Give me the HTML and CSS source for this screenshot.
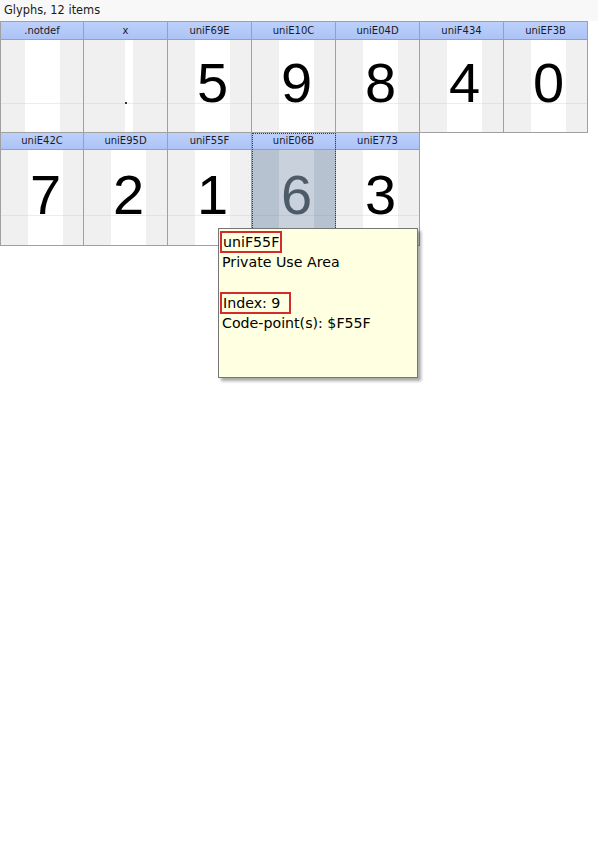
FILE: index.html
```html
<!DOCTYPE html>
<html>
<head>
<meta charset="utf-8">
<link rel="stylesheet" href="styles.css">
</head>
<body>
<div class="titlebar">Glyphs, 12 items</div>
<div class="grid">
  <div class="cell"><div class="hd">.notdef</div><div class="gl"><span class="box notdef"></span></div></div>
  <div class="cell"><div class="hd">x</div><div class="gl"><span class="box xbox"><span class="tick"></span></span></div></div>
  <div class="cell"><div class="hd">uniF69E</div><div class="gl"><span class="box">5</span></div></div>
  <div class="cell"><div class="hd">uniE10C</div><div class="gl"><span class="box">9</span></div></div>
  <div class="cell"><div class="hd">uniE04D</div><div class="gl"><span class="box">8</span></div></div>
  <div class="cell"><div class="hd">uniF434</div><div class="gl"><span class="box">4</span></div></div>
  <div class="cell"><div class="hd">uniEF3B</div><div class="gl"><span class="box">0</span></div></div>
  <div class="cell row2"><div class="hd">uniE42C</div><div class="gl"><span class="box">7</span></div></div>
  <div class="cell row2"><div class="hd">uniE95D</div><div class="gl"><span class="box">2</span></div></div>
  <div class="cell row2"><div class="hd">uniF55F</div><div class="gl"><span class="box">1</span></div></div>
  <div class="cell row2 sel"><div class="hd">uniE06B</div><div class="gl"><span class="box">6</span></div></div>
  <div class="cell row2"><div class="hd">uniE773</div><div class="gl"><span class="box">3</span></div></div>
</div>
<div class="tooltip">
  <div class="tl"><span class="mark">uniF55F</span></div>
  <div class="tl">Private Use Area</div>
  <div class="tl">&nbsp;</div>
  <div class="tl"><span class="mark wide">Index: 9</span></div>
  <div class="tl">Code-point(s): $F55F</div>
</div>
</body>
</html>
```
FILE: styles.css
```css
html, body {
  margin: 0;
  padding: 0;
  background: #ffffff;
}
body {
  position: relative;
  width: 598px;
  height: 855px;
  font-family: "DejaVu Sans", sans-serif;
}
.titlebar {
  height: 21px;
  line-height: 21px;
  padding-left: 4px;
  font-size: 11.4px;
  color: #1a1a1a;
  background: #f8f8f8;
  box-sizing: border-box;
}
.grid {
  display: grid;
  grid-template-columns: 83px repeat(6, 84px);
  width: 588px;
  box-sizing: border-box;
  border-top: 1px solid #a0a0a0;
  border-left: 1px solid #a0a0a0;
}
.cell {
  border-right: 1px solid #a0a0a0;
  border-bottom: 1px solid #a0a0a0;
  display: flex;
  flex-direction: column;
}
.hd {
  height: 17px;
  line-height: 17px;
  text-align: center;
  font-size: 10px;
  color: #1a1a2a;
  background: linear-gradient(#bcd0fa, #adc3f5);
  border-bottom: 1px solid #a0a0a0;
}
.gl {
  height: 92px;
  display: flex;
  background:
    linear-gradient(to bottom, transparent 63px, #e2e2e2 63px, #e2e2e2 64px, transparent 64px);
  background-color: #f0f0f0;
}
.row2 .hd {
  height: 16px;
  line-height: 16px;
}
.row2 .gl {
  height: 95px;
  background:
    linear-gradient(to bottom, transparent 65px, #e2e2e2 65px, #e2e2e2 66px, transparent 66px);
  background-color: #f0f0f0;
}
.box {
  display: block;
  margin-left: 27px;
  width: 35px;
  background:
    linear-gradient(to bottom, transparent 63px, #ececec 63px, #ececec 64px, transparent 64px);
  background-color: #ffffff;
  font-family: "Liberation Sans", Arial, sans-serif;
  font-size: 56px;
  line-height: 56px;
  padding-top: 15px;
  box-sizing: border-box;
  text-align: center;
  color: #000;
}
.row2 .box {
  padding-top: 17px;
  background:
    linear-gradient(to bottom, transparent 65px, #ececec 65px, #ececec 66px, transparent 66px);
  background-color: #ffffff;
}
.box.notdef {
  margin-left: 24px;
  width: 35px;
}
.box.xbox {
  margin-left: 41px;
  width: 8px;
  position: relative;
}
.tick {
  position: absolute;
  left: 0;
  top: 62px;
  width: 2px;
  height: 2px;
  background: #333;
}
.sel {
  outline: 1px dotted #6a1f6a;
  outline-offset: -1px;
}
.sel .gl {
  background:
    linear-gradient(to bottom, transparent 65px, #adb9c7 65px, #adb9c7 66px, transparent 66px);
  background-color: #b6c2cf;
}
.sel .box {
  background:
    linear-gradient(to bottom, transparent 65px, #bcc6d2 65px, #bcc6d2 66px, transparent 66px);
  background-color: #c8d1dc;
  color: #4d5b69;
}
.tooltip {
  position: absolute;
  left: 218px;
  top: 228px;
  width: 200px;
  height: 150px;
  box-sizing: border-box;
  background: #ffffe1;
  border: 1px solid #767676;
  box-shadow: 3px 3px 3px rgba(0, 0, 0, 0.35);
  padding: 2px 0 0 3px;
  font-family: "DejaVu Sans", sans-serif;
  font-size: 14.2px;
  color: #000;
}
.tl {
  height: 20px;
  line-height: 20px;
  white-space: nowrap;
}
.tl:nth-child(2) {
  margin-top: 1px;
}
.tl:nth-child(5) {
  margin-top: 1px;
}
.mark {
  display: inline-block;
  margin-left: -2px;
  padding: 0 1px 0 1px;
  line-height: 18px;
  border: 2px solid #d42b2b;
}
.mark.wide {
  padding-right: 9px;
}
```
